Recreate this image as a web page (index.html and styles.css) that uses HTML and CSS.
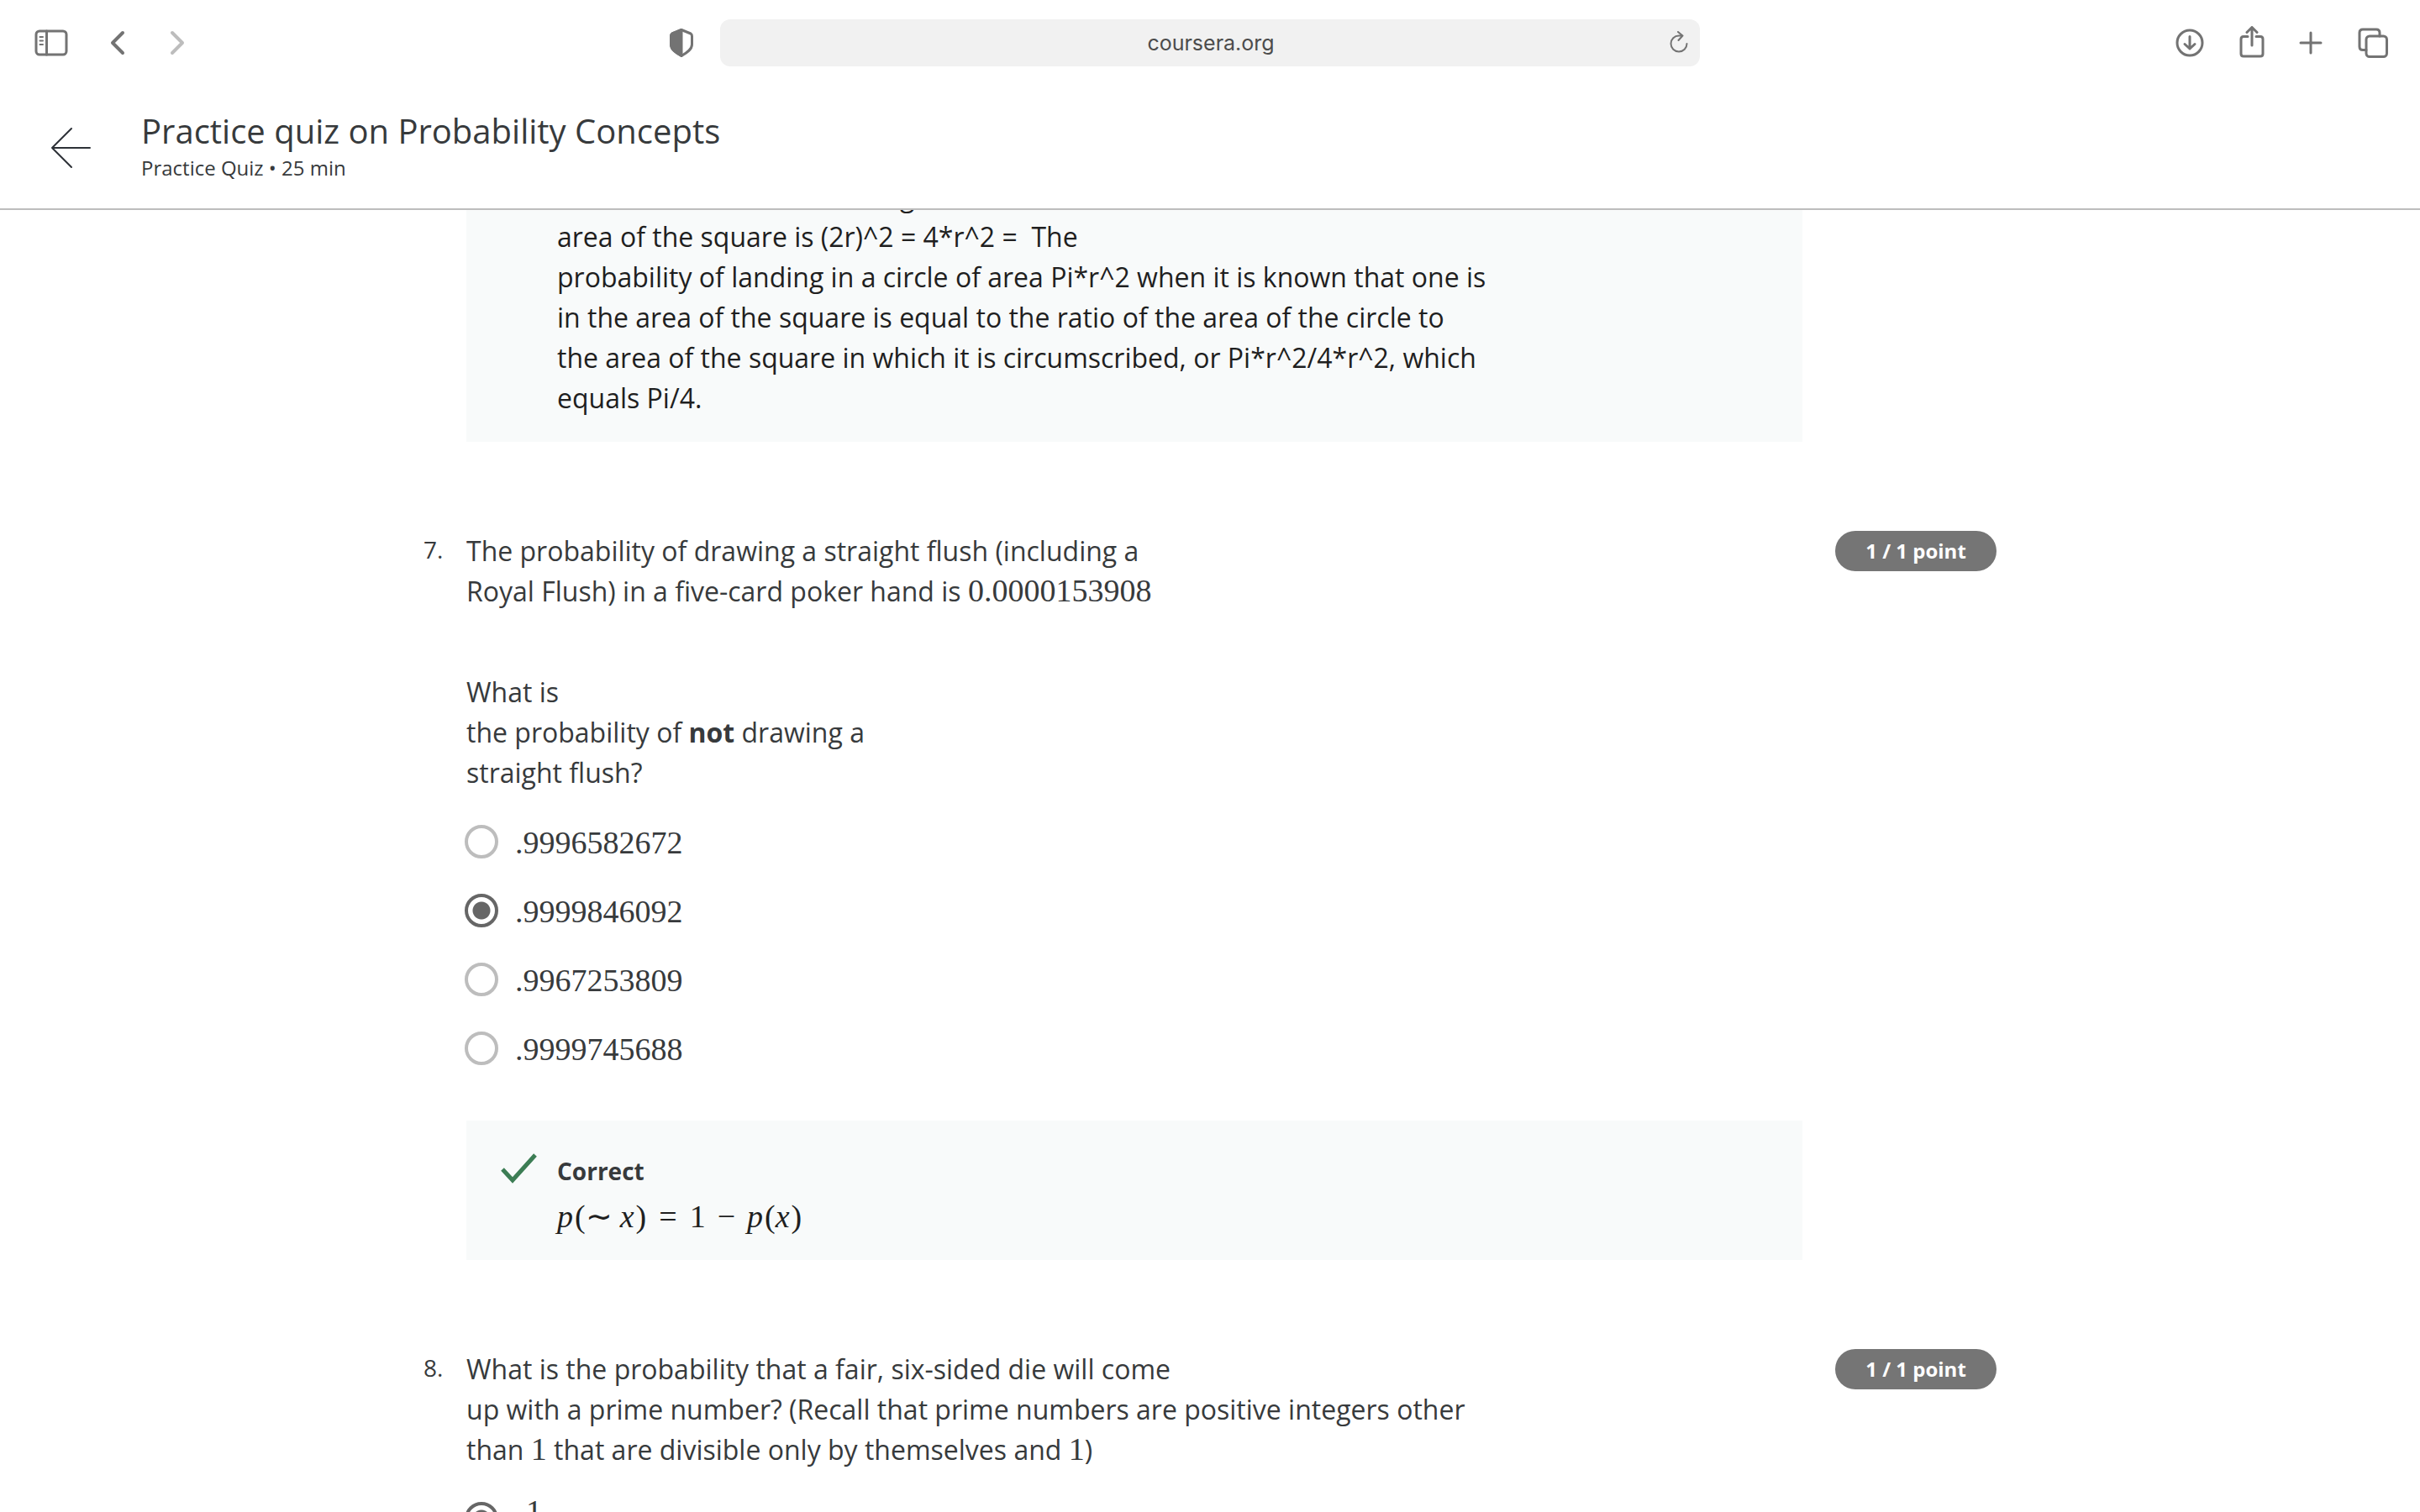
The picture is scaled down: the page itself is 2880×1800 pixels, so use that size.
FILE: index.html
```html
<!DOCTYPE html>
<html lang="en">
<head>
<meta charset="utf-8">
<title>Practice quiz on Probability Concepts</title>
<link rel="stylesheet" href="styles.css">
</head>
<body>
<div class="browser-bar">
  <div class="bar-group bar-left">
    <button class="icon-btn" aria-label="Sidebar"><svg width="40" height="32" viewBox="0 0 40 32"><rect x="2" y="2" width="36" height="28" rx="4"/><path d="M14.500 2V30"/><path class="thin" d="M6.500 9H10M6.500 13.500H10M6.500 18H10"/></svg></button>
    <button class="icon-btn" aria-label="Back"><svg width="21" height="30" viewBox="0 0 21 30"><path class="bold" d="M15 3L3 15L15 27"/></svg></button>
    <button class="icon-btn faded" aria-label="Forward"><svg width="18" height="30" viewBox="0 0 18 30"><path class="bold" d="M3 3L15 15L3 27"/></svg></button>
  </div>
  <div class="bar-center">
    <button class="icon-btn" aria-label="Privacy report"><svg width="28" height="34" viewBox="0 0 28 34"><path d="M14 1.500L25 6Q26.500 7 26.500 9V19C26.500 25 20 29 14 32.500C8 29 1.500 25 1.500 19V9Q1.500 7 3 6Z"/><path class="solid" d="M14 1.500L3 6Q1.500 7 1.500 9V19C1.500 25 8 29 14 32.500Z"/></svg></button>
    <div class="address">
      <input class="address-input" type="text" aria-label="Address" value="coursera.org">
      <button class="icon-btn reload" aria-label="Reload"><svg width="22" height="26" viewBox="0 0 22 26"><path class="thin" d="M20.500 15A9.500 9.500 0 1 1 11 5.500H15.500M10 1L15.500 5.500L10.500 11"/></svg></button>
    </div>
  </div>
  <div class="bar-group bar-right">
    <button class="icon-btn" aria-label="Downloads"><svg width="36" height="36" viewBox="0 0 36 36"><circle cx="18" cy="18" r="15"/><path d="M18 10.500V25M12 19.500L18 25L24 19.500"/></svg></button>
    <button class="icon-btn" aria-label="Share"><svg width="32" height="40" viewBox="0 1 32 40"><path d="M11 13.500H6Q3 13.500 3 16.500V34Q3 37 6 37H26Q29 37 29 34V16.500Q29 13.500 26 13.500H21M16 24V3M10 8.500L16 2.500L22 8.500"/></svg></button>
    <button class="icon-btn" aria-label="New tab"><svg width="28" height="28" viewBox="0 0 28 28"><path d="M14 2V26M2 14H26"/></svg></button>
    <button class="icon-btn" aria-label="Tab overview"><svg width="38" height="36" viewBox="-2 0 38 36"><rect x="10" y="10" width="24.500" height="24.500" rx="4"/><path d="M10 26.500H6Q2 26.500 2 22.500V6Q2 2 6 2H22Q26 2 26 6V10"/></svg></button>
  </div>
</div>
<header class="quiz-header">
  <a class="back-link" href="#" aria-label="Back to course"><svg width="48" height="48" viewBox="0 0 48 48"><path class="arrow" d="M47 25H2M25 2L2 25L25 48"/></svg></a>
  <div class="heading">
    <h1 class="quiz-title">Practice quiz on Probability Concepts</h1>
    <p class="quiz-meta">Practice Quiz • 25 min</p>
  </div>
</header>
<main class="quiz">
  <section class="feedback feedback-scrolled">
    <p class="explain">The side of the box is of length 2r. The<br>area of the square is (2r)^2 = 4*r^2 = &nbsp;The<br>probability of landing in a circle of area Pi*r^2 when it is known that one is<br>in the area of the square is equal to the ratio of the area of the circle to<br>the area of the square in which it is circumscribed, or Pi*r^2/4*r^2, which<br>equals Pi/4.</p>
  </section>
  <section class="question">
    <span class="number">7.</span>
    <div class="body">
      <p class="prompt">The probability of drawing a straight flush (including a<br>Royal Flush) in a five-card poker hand is <span class="math">0.0000153908</span></p>
      <p class="prompt second">What is<br>the probability of <strong>not</strong> drawing a<br>straight flush?</p>
      <div class="options">
        <label class="option"><input class="radio" type="radio" name="q7"><span class="math">.9996582672</span></label>
        <label class="option"><input class="radio" type="radio" name="q7" checked><span class="math">.9999846092</span></label>
        <label class="option"><input class="radio" type="radio" name="q7"><span class="math">.9967253809</span></label>
        <label class="option"><input class="radio" type="radio" name="q7"><span class="math">.9999745688</span></label>
      </div>
    </div>
    <span class="points">1 / 1 point</span>
  </section>
  <section class="feedback feedback-answer">
    <svg class="check" width="44" height="38" viewBox="0 0 44 38"><path d="M3 20L15 33L42 3"/></svg>
    <div>
      <h2 class="verdict">Correct</h2>
      <p class="formula"><i>p</i>(<span class="rel-open">∼</span><i>x</i>)<span class="rel">=</span>1<span class="bin">−</span><i>p</i>(<i>x</i>)</p>
    </div>
  </section>
  <section class="question">
    <span class="number">8.</span>
    <div class="body">
      <p class="prompt">What is the probability that a fair, six-sided die will come<br>up with a prime number? (Recall that prime numbers are positive integers other<br>than <span class="math">1</span> that are divisible only by themselves and <span class="math">1</span>)</p>
      <div class="options">
        <label class="option"><input class="radio" type="radio" name="q8" checked><span class="fraction"><span>1</span><span class="denominator">2</span></span></label>
      </div>
    </div>
    <span class="points">1 / 1 point</span>
  </section>
</main>
</body>
</html>
```
FILE: styles.css
```css
* { box-sizing: border-box; margin: 0; }
html, body { height: 100%; }
body {
  display: flex;
  flex-direction: column;
  overflow: hidden;
  background: #fff;
  color: #373a3c;
  font-family: "Open Sans", "Noto Sans", sans-serif;
  font-size: 32px;
  line-height: 48px;
}
svg { display: block; fill: none; stroke: currentColor; stroke-width: 3; stroke-linecap: round; stroke-linejoin: round; }
.bold { stroke-width: 4; }
.thin { stroke-width: 2; }
.solid { fill: currentColor; }

.browser-bar {
  display: grid;
  grid-template-columns: 1fr auto 1fr;
  align-items: center;
  flex: none;
  height: 102px;
  padding: 0 38px 0 41px;
}
.icon-btn { padding: 0; border: 0; background: none; color: #737373; }
.faded { color: #bdbdbd; }
.bar-group { display: flex; align-items: center; }
.bar-left { gap: 50px; }
.bar-right { gap: 40px; justify-content: flex-end; }
.bar-center { display: flex; align-items: center; gap: 32px; padding-right: 63px; }
.address { position: relative; width: 1166px; }
.address-input {
  display: block;
  width: 100%;
  height: 56px;
  padding: 0 0 0 2px;
  border: 0;
  border-radius: 12px;
  background: #f1f1f1;
  color: #4c4c4c;
  font-family: Inter, sans-serif;
  font-size: 25px;
  text-align: center;
}
.reload { position: absolute; right: 14px; top: 14px; }

.quiz-header {
  display: flex;
  align-items: center;
  gap: 60px;
  flex: none;
  height: 148px;
  padding: 0 60px;
  border-bottom: 2px solid #bdbdbd;
}
.back-link { color: #2d3137; }
.back-link svg { overflow: visible; }
.arrow { stroke-width: 2; }
.heading { padding-bottom: 2px; }
.quiz-title { font-size: 40px; font-weight: 400; line-height: 52px; }
.quiz-meta { font-size: 24px; line-height: 36px; }

.quiz { flex: 1; min-height: 0; width: 1872px; margin: 0 auto; overflow: hidden; }
.feedback {
  display: flex;
  gap: 24px;
  width: 1590px;
  margin-left: 51px;
  background: #f8fafa;
  color: #1f1f1f;
}
.feedback-scrolled { margin-top: -40px; padding: 0 108px 28px; }
.feedback-answer { margin-top: 62px; padding: 38px 40px 30px; }
.question { display: flex; margin-top: 106px; }
.number { flex: none; width: 51px; font-size: 28px; line-height: 44px; }
.body { flex: 1; }
.second { margin-top: 72px; }
.math, .formula, .fraction { font-family: "Liberation Serif", serif; font-size: 38px; line-height: 44px; }
.options { display: flex; flex-direction: column; gap: 36px; margin-top: 36px; }
.option { display: flex; align-items: flex-start; gap: 20px; }
.option .math { line-height: 46px; }
.radio {
  appearance: none;
  flex: none;
  width: 40px;
  height: 40px;
  margin: 2px 0 0 -2px;
  border: 4px solid #bdbdbd;
  border-radius: 50%;
}
.radio:checked { border-color: #666; background: radial-gradient(circle, #666 10px, transparent 11px); }
.points {
  flex: none;
  align-self: flex-start;
  width: 192px;
  border-radius: 24px;
  background: #757575;
  color: #fff;
  font-size: 24px;
  font-weight: 700;
  text-align: center;
}
.check { flex: none; color: #3c7d54; stroke-width: 5; stroke-linecap: butt; stroke-linejoin: miter; }
.verdict { margin-bottom: 10px; color: #373a3c; font-size: 28px; font-weight: 700; line-height: 44px; }
.formula i { margin-right: 2px; }
.rel-open { margin: 0 9px 0 0; }
.rel { margin: 0 15px; }
.bin { margin: 0 14px; }
.fraction { display: flex; flex-direction: column; margin-left: 13px; line-height: 26px; text-align: center; }
.denominator { margin-top: 8px; padding-top: 8px; border-top: 2px solid currentColor; }
```
